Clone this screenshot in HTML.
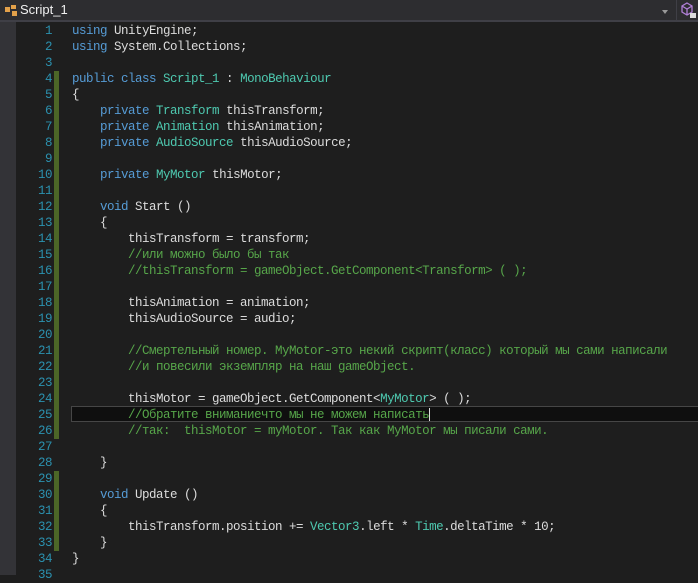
<!DOCTYPE html>
<html><head><meta charset="utf-8"><style>
body{margin:0;width:698px;height:575px;background:#1e1e1e;overflow:hidden;position:relative;font-family:"Liberation Mono","DejaVu Sans Mono",monospace;}
#top{position:absolute;left:0;top:0;width:698px;height:20px;background:#2d2d30;border-bottom:2px solid #3f3f46;box-sizing:content-box}
#title{position:absolute;left:20px;top:2px;font:13px "Liberation Sans",sans-serif;color:#f1f1f1}
#margin{position:absolute;left:0;top:22px;width:16px;height:553px;background:#333337}
.ln{position:absolute;left:16px;width:36px;text-align:right;color:#2b91af;font-size:12.5px;letter-spacing:-0.5px;line-height:16px}
.cd{position:absolute;left:72px;color:#dcdcdc;font-size:12.5px;letter-spacing:-0.5px;line-height:16px;white-space:pre}
.k{color:#569cd6}.t{color:#4ec9b0}.c{color:#57a64a}
.bar{position:absolute;left:54px;width:5px;background:#4c6627}
</style></head><body>
<div id="top">
<svg style="position:absolute;left:3px;top:3px" width="16" height="14"><path d="M2 4h5v5H2zM8 2h5v4H8zM9 8h5v5H9z" fill="#e3a14a"/></svg>
<div id="title">Script_1</div>
<div style="position:absolute;left:662px;top:10px;border:3px solid transparent;border-top:4px solid #999"></div>
<div style="position:absolute;left:676px;top:0;width:1px;height:20px;background:#3f3f46"></div>
<svg style="position:absolute;left:679px;top:1px" width="19" height="18"><path d="M8 2l5 3v6l-5 3-5-3V5zM3 5l5 3 5-3M8 8v6" fill="none" stroke="#b180d7" stroke-width="1.3"/><rect x="11" y="12" width="6" height="5" fill="#ddd"/></svg>
</div>
<div id="margin"></div>
<div class="bar" style="top:71px;height:368px"></div>
<div class="bar" style="top:471px;height:80px"></div>
<div style="position:absolute;left:71px;top:406px;width:640px;height:16px;background:#0f0f0f;border:1px solid #464646;box-sizing:border-box"></div>
<div style="position:absolute;left:429px;top:408px;width:1px;height:13px;background:#dcdcdc"></div>
<div id="lines"></div>
<script>
var L=[
'<span class="k">using</span> UnityEngine;',
'<span class="k">using</span> System.Collections;',
'',
'<span class="k">public class</span> <span class="t">Script_1</span> : <span class="t">MonoBehaviour</span>',
'{',
'    <span class="k">private</span> <span class="t">Transform</span> thisTransform;',
'    <span class="k">private</span> <span class="t">Animation</span> thisAnimation;',
'    <span class="k">private</span> <span class="t">AudioSource</span> thisAudioSource;',
'',
'    <span class="k">private</span> <span class="t">MyMotor</span> thisMotor;',
'',
'    <span class="k">void</span> Start ()',
'    {',
'        thisTransform = transform;',
'        <span class="c">//или можно было бы так</span>',
'        <span class="c">//thisTransform = gameObject.GetComponent&lt;Transform&gt; ( );</span>',
'',
'        thisAnimation = animation;',
'        thisAudioSource = audio;',
'',
'        <span class="c">//Смертельный номер. MyMotor-это некий скрипт(класс) который мы сами написали</span>',
'        <span class="c">//и повесили экземпляр на наш gameObject.</span>',
'',
'        thisMotor = gameObject.GetComponent&lt;<span class="t">MyMotor</span>&gt; ( );',
'        <span class="c">//Обратите вниманиечто мы не можем написать</span>',
'        <span class="c">//так:  thisMotor = myMotor. Так как MyMotor мы писали сами.</span>',
'',
'    }',
'',
'    <span class="k">void</span> Update ()',
'    {',
'        thisTransform.position += <span class="t">Vector3</span>.left * <span class="t">Time</span>.deltaTime * 10;',
'    }',
'}',
''];
var h='';
for(var i=0;i<L.length;i++){var y=23+i*16;
h+='<div class="ln" style="top:'+y+'px">'+(i+1)+'</div><div class="cd" style="top:'+y+'px">'+L[i]+'</div>';}
document.getElementById('lines').innerHTML=h;
</script>
</body></html>
